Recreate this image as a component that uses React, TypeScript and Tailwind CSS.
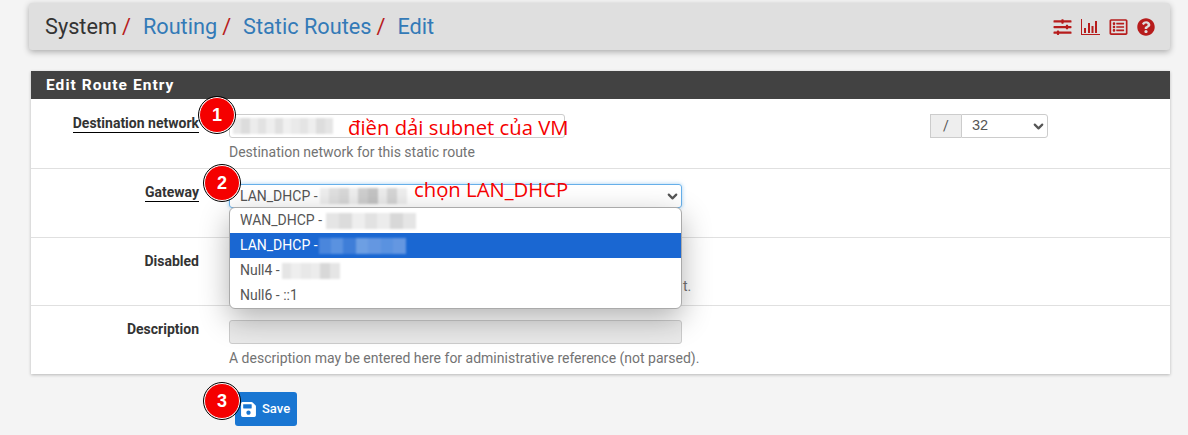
import { ChevronDown } from "lucide-react";
import { FaQuestionCircle, FaRegListAlt, FaSave, FaSlidersH } from "react-icons/fa";

// blurred-out IP addresses in the screenshot
function Blur({ cells, className = "" }: { cells: string[]; className?: string }) {
  return (
    <span className={`inline-flex h-[16px] blur-[1px] ${className}`}>
      {cells.map((c, i) => (
        <span key={i} className={`h-full flex-1 ${c}`} />
      ))}
    </span>
  );
}

function Badge({ n, className }: { n: number; className: string }) {
  return (
    <div
      className={`absolute flex h-[36px] w-[36px] items-center justify-center rounded-full border-[1.5px] border-white bg-[#f50000] font-['Liberation_Sans'] text-[18px] font-bold text-white outline outline-1 outline-black ${className}`}
    >
      {n}
    </div>
  );
}

function Row({
  label,
  line,
  className,
  labelTop = "pt-[13px]",
  fieldTop = "pt-[15px]",
  children,
}: {
  label: string;
  line?: boolean;
  className: string;
  labelTop?: string;
  fieldTop?: string;
  children: React.ReactNode;
}) {
  return (
    <div className={`flex ${className}`}>
      <div className={`w-[168px] text-right text-[14px] leading-[20px] font-bold text-[#333] ${labelTop}`}>
        <span className={line ? "border-b border-black pb-[1px]" : ""}>{label}</span>
      </div>
      <div className={`ml-[30px] flex-1 ${fieldTop}`}>{children}</div>
    </div>
  );
}

function ChartIcon() {
  return (
    <svg width="19" height="16" viewBox="0 0 19 16" fill="currentColor">
      <rect x="0" y="0" width="1" height="16" />
      <rect x="0" y="15" width="19" height="1" />
      <rect x="3" y="9" width="2" height="5" />
      <rect x="7" y="4" width="2" height="10" />
      <rect x="10.5" y="7" width="2" height="7" />
      <rect x="14" y="2" width="2" height="12" />
    </svg>
  );
}

export default function App() {
  return (
    <div className="relative h-[435px] w-[1188px] overflow-hidden bg-[#f4f4f4] font-['Roboto',sans-serif] text-[14px]">
      <div className="pt-[3px] pr-[18px] pl-[29px]">
        {/* Breadcrumb bar */}
        <div className="flex h-[47px] items-center justify-between rounded-[3px] bg-[#dfdfdf] pr-[15px] pl-[16px] shadow-[0_2px_6px_rgba(0,0,0,0.3)]">
          <div className="flex items-center text-[21.7px] leading-[28px] text-[#333]">
            System<span className="mr-[12px] ml-[5px] text-[#b71c1c]">/</span>
            <span className="text-[#337ab7]">Routing</span>
            <span className="mr-[12px] ml-[5px] text-[#b71c1c]">/</span>
            <span className="text-[#337ab7]">Static Routes</span>
            <span className="mr-[12px] ml-[5px] text-[#b71c1c]">/</span>
            <span className="text-[#337ab7]">Edit</span>
          </div>
          <div className="flex items-center gap-[9px] text-[#b71c1c]">
            <FaSlidersH className="h-[18px] w-[19px]" />
            <ChartIcon />
            <FaRegListAlt className="h-[18px] w-[19px]" />
            <FaQuestionCircle className="h-[18px] w-[18px]" />
          </div>
        </div>

        {/* Panel */}
        <div className="mt-[21px] ml-[2px] bg-white shadow-[0_1px_3px_rgba(0,0,0,0.25)]">
          <div className="flex h-[28px] items-center bg-[#424242] pt-[1px] pl-[15px] text-[15.5px] font-bold tracking-[1.05px] text-white">
            Edit Route Entry
          </div>
          <Row label="Destination network" line labelTop="pt-[14px]" className="h-[70px] border-b border-[#e0e0e0]">
            <div className="flex">
              <div className="flex h-[24px] w-[336px] items-center rounded-[3px] border border-[#ccc] pl-[3px]">
                <Blur
                  className="w-[100px]"
                  cells={["bg-[#e8e8e8]", "bg-[#dcdcdc]", "bg-[#ececec]", "bg-[#e2e2e2]", "bg-[#eeeeee]", "bg-[#e0e0e0]", "bg-[#f0f0f0]", "bg-[#eaeaea]", "bg-[#e4e4e4]", "bg-[#eeeeee]", "bg-[#dddddd]", "bg-[#e5e5e5]"]}
                />
              </div>
              <div className="ml-[365px] flex h-[24px]">
                <div className="flex w-[31px] items-center justify-center border-y border-l border-[#ccc] bg-[#eee] text-[#555]">/</div>
                <div className="flex w-[87px] items-center justify-between rounded-r-[3px] border border-[#ccc] pr-[1px] pl-[10px] font-['Liberation_Sans'] text-[14.5px] text-[#555]">
                  32
                  <ChevronDown className="h-[15px] w-[15px]" strokeWidth={3.5} />
                </div>
              </div>
            </div>
            <p className="mt-[6px] leading-[16px] text-[#737373]">Destination network for this static route</p>
          </Row>
          <Row label="Gateway" line className="h-[69px] border-b border-[#e0e0e0]">
            <div className="flex h-[24px] w-[453px] items-center justify-between rounded-[3px] border border-[#66afe9] pr-[1px] pl-[10px] text-[#555] shadow-[0_0_4px_rgba(102,175,233,0.6)]">
              <span className="flex items-center gap-[2px]">
                LAN_DHCP -
                <Blur
                  className="w-[87px]"
                  cells={["bg-[#eeeeee]", "bg-[#e0e0e0]", "bg-[#d8d8d8]", "bg-[#eeeeee]", "bg-[#cfcfcf]", "bg-[#c4c4c4]", "bg-[#ececec]", "bg-[#d5d5d5]", "bg-[#eeeeee]"]}
                />
              </span>
              <ChevronDown className="h-[15px] w-[15px]" strokeWidth={3.5} />
            </div>
          </Row>
          <Row label="Disabled" fieldTop="pt-[40px]" className="h-[68px] border-b border-[#e0e0e0]">
            {/* only the tail of this hint shows past the open list */}
            <p className="pl-[454px] leading-[16px] text-[#737373]">t.</p>
          </Row>
          <Row label="Description" fieldTop="pt-[14px]" className="h-[68px]">
            <div className="h-[24px] w-[453px] rounded-[3px] border border-[#ccc] bg-[#eaeaea]" />
            <p className="mt-[6px] leading-[16px] text-[#737373]">
              A description may be entered here for administrative reference (not parsed).
            </p>
          </Row>
        </div>

        <button className="mt-[18px] ml-[206px] flex h-[34px] w-[62px] items-center gap-[5px] rounded-[3px] bg-[#1976d2] pl-[5px] text-[13px] font-medium text-white">
          <FaSave className="h-[17px] w-[17px]" />
          Save
        </button>
      </div>

      {/* Open select list */}
      <div className="absolute top-[207px] left-[229px] w-[453px] overflow-hidden rounded-[6px] border border-[#aaa] bg-white text-[#555] shadow-[0_10px_30px_rgba(0,0,0,0.3)]">
        <div className="flex h-[25px] items-center gap-[4px] pl-[10px]">
          WAN_DHCP -
          <Blur
            className="w-[90px]"
            cells={["bg-[#e5e5e5]", "bg-[#dcdcdc]", "bg-[#eeeeee]", "bg-[#e2e2e2]", "bg-[#ececec]", "bg-[#d8d8d8]", "bg-[#e5e5e5]"]}
          />
        </div>
        <div className="flex h-[25px] items-center gap-[1px] bg-[#1a67d2] pl-[10px] text-white">
          LAN_DHCP -
          <Blur
            className="w-[87px]"
            cells={["bg-[#4a86dc]", "bg-[#5a92e0]", "bg-[#3f7ed8]", "bg-[#6d9fe3]", "bg-[#6497e1]", "bg-[#5a92e0]", "bg-[#6497e1]"]}
          />
        </div>
        <div className="flex h-[25px] items-center gap-[2px] pl-[10px]">
          Null4 -
          <Blur
            className="w-[58px]"
            cells={["bg-[#e5e5e5]", "bg-[#eeeeee]", "bg-[#e8e8e8]", "bg-[#ececec]", "bg-[#d8d8d8]", "bg-[#e5e5e5]"]}
          />
        </div>
        <div className="flex h-[25px] items-center pl-[10px]">Null6 - ::1</div>
      </div>

      {/* Annotations over the screenshot */}
      <span className="absolute top-[113px] left-[348px] font-['Open_Sans'] text-[20.3px] leading-[28px] text-[#f50000]">điền dải subnet của VM</span>
      <span className="absolute top-[175px] left-[414px] font-['Open_Sans'] text-[20.3px] leading-[28px] text-[#f50000]">chọn LAN_DHCP</span>
      <Badge n={1} className="top-[97px] left-[199px]" />
      <Badge n={2} className="top-[165px] left-[204px]" />
      <Badge n={3} className="top-[383px] left-[204px]" />
    </div>
  );
}
